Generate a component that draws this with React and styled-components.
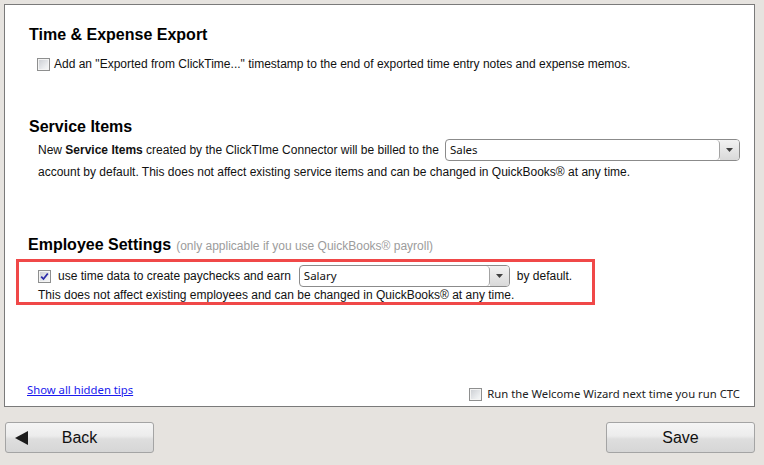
import React from 'react';
import styled, { createGlobalStyle } from 'styled-components';

const GlobalStyle = createGlobalStyle`
  html, body {
    margin: 0;
    padding: 0;
    background: #e6e3df;
  }
  body {
    font-family: "Liberation Sans", Arial, sans-serif;
    color: #111;
  }
`;

const Page = styled.div`
  width: 764px;
  height: 465px;
  display: flex;
  flex-direction: column;
  box-sizing: border-box;
`;

const Panel = styled.div`
  margin: 4px 9px 0 4px;
  height: 403px;
  box-sizing: border-box;
  background: #fff;
  border: 1px solid #7a7a7a;
  display: flex;
  flex-direction: column;
  padding: 20px 0 4px 0;
`;

const Heading = styled.h2`
  margin: ${p => p.$top || 0}px 0 0 0;
  padding-left: ${p => p.$left || 24}px;
  font-size: 16px;
  line-height: 20px;
  font-weight: bold;
  color: #000;
  display: flex;
  align-items: baseline;
  gap: 5px;
`;

const Note = styled.span`
  font-size: 12px;
  font-weight: normal;
  color: #9c9c9c;
`;

const Row = styled.div`
  display: flex;
  align-items: center;
  margin-top: ${p => p.$top || 0}px;
  padding-left: ${p => p.$left || 33}px;
  font-size: 12px;
  line-height: ${p => p.$lh || 16}px;
  min-height: ${p => p.$lh || 16}px;
  color: #111;
`;

const Label = styled.span`
  margin-left: ${p => p.$gap || 0}px;
  margin-right: ${p => p.$after || 0}px;
  white-space: nowrap;
`;

const Box = styled.span`
  width: 13px;
  height: 13px;
  box-sizing: border-box;
  flex: none;
  border: 1px solid #8e8f8f;
  box-shadow: inset 0 0 0 1px #f4f4f4;
  background: linear-gradient(135deg, #c9ccd1 0%, #eceef0 70%, #f8f8f8 100%);
  display: flex;
  align-items: center;
  justify-content: center;
`;

const Highlight = styled.div`
  margin: 3px 0 0 11px;
  width: 579px;
  box-sizing: border-box;
  border: 3px solid #f04848;
  padding: 3px 0 0 0;
  display: flex;
  flex-direction: column;
`;

const Combo = styled.div`
  display: flex;
  width: ${p => p.$w}px;
  height: 22px;
  box-sizing: border-box;
  flex: none;
  border: 1px solid #8b8b8b;
  border-radius: 4px;
  overflow: hidden;
  background: #fff;
  font-family: "Noto Sans", "Liberation Sans", sans-serif;
  font-size: 11.5px;
  color: #111;
`;

const ComboValue = styled.div`
  flex: 1;
  display: flex;
  align-items: center;
  padding-left: 4px;
  border-radius: 0 4px 4px 0;
  border-right: 1px solid #a3a3a3;
`;

const ComboButton = styled.div`
  width: 19px;
  display: flex;
  align-items: center;
  justify-content: center;
  background: linear-gradient(#f2f2f2, #d9d9d9);
`;

const Footer = styled.div`
  margin-top: auto;
  display: flex;
  justify-content: space-between;
  align-items: flex-end;
  padding: 0 14px 0 22px;
  font-family: "Noto Sans", "Liberation Sans", sans-serif;
  font-size: 11.3px;
  line-height: 16px;
`;

const TipLink = styled.a`
  color: #1a1aee;
  text-decoration: underline;
  margin-bottom: 4px;
  cursor: pointer;
`;

const WizardOption = styled.label`
  display: flex;
  align-items: center;
  gap: 5px;
  color: #222;
`;

const ButtonBar = styled.div`
  display: flex;
  justify-content: space-between;
  padding: 15px 9px 0 5px;
`;

const NavButton = styled.button`
  position: relative;
  width: 149px;
  height: 31px;
  border: 1px solid #a4a4a4;
  border-radius: 3px;
  background: linear-gradient(#f5f5f5 0%, #ececec 45%, #dedede 55%, #d6d6d6 100%);
  font-family: "Liberation Sans", Arial, sans-serif;
  font-size: 16px;
  color: #111;
  padding: 0;
  cursor: pointer;
`;

const BackArrow = styled.span`
  position: absolute;
  left: 9px;
  top: 8px;
  width: 0;
  height: 0;
  border-top: 7px solid transparent;
  border-bottom: 7px solid transparent;
  border-right: 13px solid #1c1c1c;
`;

const Check = ({ checked }) => (
  <Box>
    {checked && (
      <svg width="9" height="9" viewBox="0 0 9 9">
        <path d="M1.2 4.6 L3.5 7 L7.8 1.5" fill="none" stroke="#2b2ba8" strokeWidth="1.8" />
      </svg>
    )}
  </Box>
);

const Select = ({ value, width }) => (
  <Combo $w={width}>
    <ComboValue>{value}</ComboValue>
    <ComboButton>
      <svg width="7" height="4" viewBox="0 0 7 4">
        <path d="M0 0 H7 L3.5 4 Z" fill="#404040" />
      </svg>
    </ComboButton>
  </Combo>
);

const App = () => {
  return (
    <Page>
      <GlobalStyle />
      <Panel>
        <Heading>Time &amp; Expense Export</Heading>
        <Row $top={11} $left={32}>
          <Check />
          <Label $gap={4}>Add an "Exported from ClickTime..." timestamp to the end of exported time entry notes and expense memos.</Label>
        </Row>

        <Heading $top={45}>Service Items</Heading>
        <Row $top={2} $lh={22}>
          <Label $after={6}>New <b>Service Items</b> created by the ClickTIme Connector will be billed to the</Label>
          <Select value="Sales" width={295} />
        </Row>
        <Row $top={3}>
          <Label>account by default. This does not affect existing service items and can be changed in QuickBooks® at any time.</Label>
        </Row>

        <Heading $top={55} $left={23}>
          Employee Settings <Note>(only applicable if you use QuickBooks® payroll)</Note>
        </Heading>
        <Highlight>
          <Row $left={19} $lh={22}>
            <Check checked />
            <Label $gap={7} $after={8}>use time data to create paychecks and earn</Label>
            <Select value="Salary" width={211} />
            <Label $gap={7}>by default.</Label>
          </Row>
          <Row $top={1} $left={19} $lh={14}>
            <Label>This does not affect existing employees and can be changed in QuickBooks® at any time.</Label>
          </Row>
        </Highlight>

        <Footer>
          <TipLink>Show all hidden tips</TipLink>
          <WizardOption>
            <Check />
            Run the Welcome Wizard next time you run CTC
          </WizardOption>
        </Footer>
      </Panel>
      <ButtonBar>
        <NavButton>
          <BackArrow />
          Back
        </NavButton>
        <NavButton>Save</NavButton>
      </ButtonBar>
    </Page>
  );
};

export default App;
